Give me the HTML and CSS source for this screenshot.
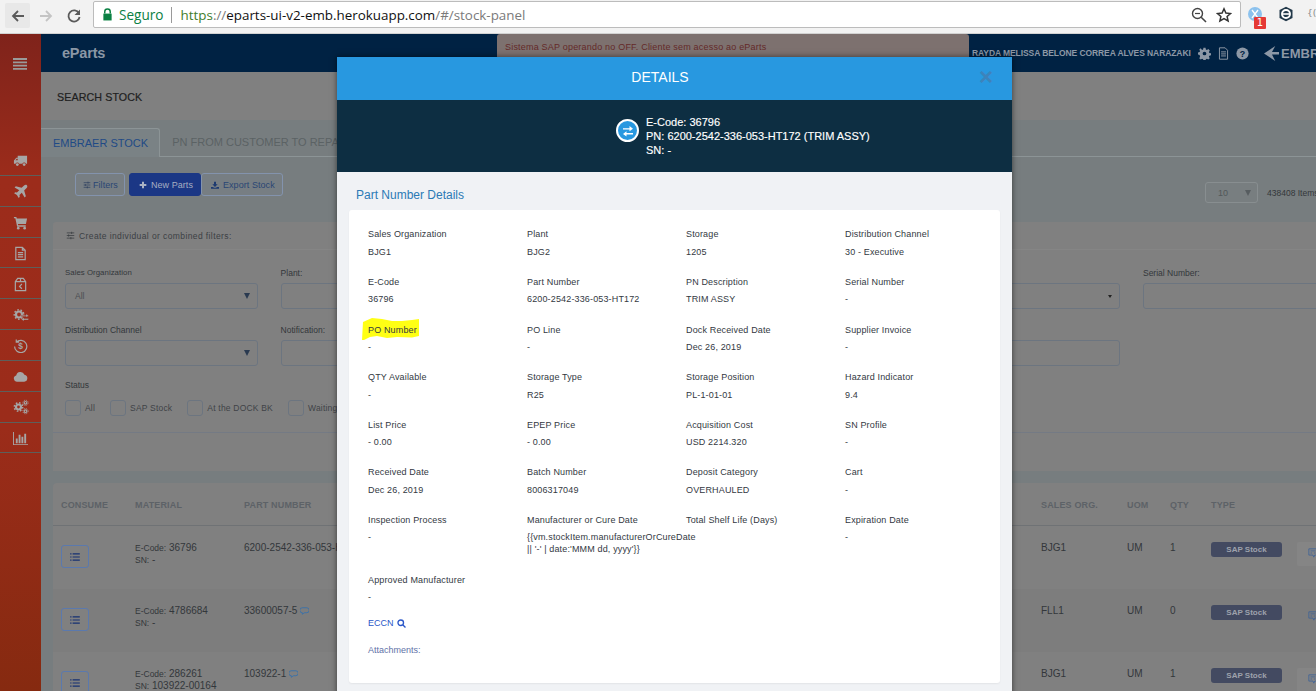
FILE: index.html
```html
<!DOCTYPE html>
<html lang="pt">
<head>
<meta charset="utf-8">
<title>eParts</title>
<link rel="stylesheet" href="styles.css">
</head>
<body>
<header class="chrome">
  <div class="nav-btn nav-btn-active"><svg viewBox="0 0 16 16" class="chrome-ic"><path d="M14 8H3M8 3 3 8l5 5" fill="none" stroke="#5a5a5a" stroke-width="1.8"/></svg></div>
  <div class="nav-btn"><svg viewBox="0 0 16 16" class="chrome-ic"><path d="M2 8h11M8 3l5 5-5 5" fill="none" stroke="#c4c4c4" stroke-width="1.8"/></svg></div>
  <div class="nav-btn"><svg viewBox="0 0 16 16" class="chrome-ic"><path d="M13 5.2A5.6 5.6 0 1 0 13.6 9" fill="none" stroke="#5a5a5a" stroke-width="1.8"/><path d="M14 1.5V7H8.5z" fill="#5a5a5a"/></svg></div>
  <div class="address">
    <svg viewBox="0 0 12 14" class="lock"><path d="M3 6V4a3 3 0 0 1 6 0v2" fill="none" stroke="#0b8043" stroke-width="1.6"/><rect x="1.5" y="6" width="9" height="7.5" fill="#0b8043"/></svg>
    <span class="secure">Seguro</span>
    <span class="addr-sep"></span>
    <span class="url"><span class="url-scheme">https</span><span class="url-dim">://</span>eparts-ui-v2-emb.herokuapp.com<span class="url-dim">/#/stock-panel</span></span>
    <span class="addr-icons">
      <svg viewBox="0 0 16 16" class="chrome-ic"><circle cx="6.500" cy="6.500" r="5" fill="none" stroke="#444" stroke-width="1.4"/><path d="M10.200 10.200 15 15" stroke="#444" stroke-width="1.6"/><path d="M4 6.500h5" stroke="#444" stroke-width="1.2"/></svg>
      <svg viewBox="0 0 16 16" class="chrome-ic"><path d="m8 1.800 1.900 4.200 4.600.5-3.400 3 1 4.500L8 11.700 3.900 14l1-4.500-3.400-3 4.600-.5z" fill="none" stroke="#333" stroke-width="1.5"/></svg>
    </span>
  </div>
  <div class="ext">
    <svg viewBox="0 0 16 16" class="ext-ic"><circle cx="8" cy="8" r="7" fill="#8cc2ee"/><path d="M5 4l6 8M11 4l-6 8" stroke="#fff" stroke-width="1.3"/></svg>
    <span class="ext-badge">1</span>
  </div>
  <div class="ext ext-e"><svg viewBox="0 0 16 16" class="ext-ic"><path d="M8 .8 14.500 4v8L8 15.200 1.500 12V4z" fill="#22394a"/><circle cx="8" cy="8" r="4" fill="none" stroke="#fff" stroke-width="1.9"/><path d="M4.500 8h7" stroke="#fff" stroke-width="1.6"/></svg></div>
  <span class="ext-more">{(</span>
</header>

<div class="app">
  <aside class="side">
    <div class="burger"><svg viewBox="0 0 14 12" class="burger-ic"><path d="M0 1h14M0 4.300h14M0 7.600h14M0 10.900h14" stroke="#9a9a9a" stroke-width="1.8"/></svg></div>
    <ul class="side-list">
      <li class="side-item"><svg viewBox="0 0 16 16" class="side-ic"><path d="M5 3h10v8.500h-1.200a2 2 0 0 0-3.800 0H6.500a2 2 0 0 0-3.800 0H1V8l2.500-3H5zM4 6 2.600 7.800H5V6z"/><circle cx="4.600" cy="12.300" r="1.500"/><circle cx="11.900" cy="12.300" r="1.500"/></svg></li>
      <li class="side-item"><svg viewBox="0 0 16 16" class="side-ic"><path d="M14.800 1.200c-.8-.8-2.200-.5-3 .3L9.200 4.100 3 2.300 1.700 3.600l5 3L4.200 9.100 2.300 8.800 1.200 9.900l3 1.900 1.900 3 1.100-1.100-.3-1.900 2.500-2.500 3 5 1.300-1.300-1.800-6.200 2.600-2.600c.8-.8 1.100-2.200.3-3z"/></svg></li>
      <li class="side-item"><svg viewBox="0 0 16 16" class="side-ic"><path d="M1 2h2.600l.4 1.700H15l-1.200 6H5.300l.3 1.300h8v1.500H4.400L2.500 3.500H1z"/><circle cx="5.600" cy="14" r="1.400"/><circle cx="12.400" cy="14" r="1.400"/></svg></li>
      <li class="side-item"><svg viewBox="0 0 16 16" class="side-ic side-ic-line"><path d="M3 1.500h7l3 3v10H3zM10 1.500v3h3M5.200 7h5.600M5.200 9.300h5.600M5.200 11.600h5.600"/></svg></li>
      <li class="side-item"><svg viewBox="0 0 16 16" class="side-ic side-ic-line"><path d="M2.500 5 5 1.500h6L13.500 5v9.500h-11zM2.500 5h11M8 1.500V5M9.500 7.500 7 10l2.500 2.500"/></svg></li>
      <li class="side-item"><svg viewBox="0 0 16 16" class="side-ic-free"><circle cx="6" cy="7.500" r="3" class="gear-core"/><circle cx="6" cy="7.500" r="4.700" class="gear-teeth"/><path d="M8.500 8.300H13V6.800l2.800 2.200L13 10.200V9.400H8.500zM15.500 11.400H11V10.400L8.300 12.300 11 14.200V13H15.500z" class="gear-arrows"/></svg></li>
      <li class="side-item"><svg viewBox="0 0 16 16" class="side-ic side-ic-line"><path d="M3.500 4.500A6.500 6.500 0 1 1 1.700 9M3.500 1.500v3h3"/><text x="8" y="11.500" class="side-dollar">$</text></svg></li>
      <li class="side-item"><svg viewBox="0 0 16 16" class="side-ic"><path d="M4 13.500a3.300 3.300 0 0 1-.6-6.500 4.600 4.600 0 0 1 8.800-1A3.800 3.800 0 0 1 12 13.500z"/></svg></li>
      <li class="side-item"><svg viewBox="0 0 16 16" class="side-ic-free"><circle cx="5.500" cy="8" r="2.500" class="gear-core"/><circle cx="5.500" cy="8" r="4.200" class="gear-teeth"/><circle cx="12.500" cy="3.800" r="1.300" class="gear-core gear-small"/><circle cx="12.500" cy="3.800" r="2.600" class="gear-teeth gear-teeth-small"/><circle cx="12.500" cy="12.200" r="1.300" class="gear-core gear-small"/><circle cx="12.500" cy="12.200" r="2.600" class="gear-teeth gear-teeth-small"/></svg></li>
      <li class="side-item"><svg viewBox="0 0 16 16" class="side-ic"><path d="M0 1h1v13h15v1H0zM3 8h2v5H3zM6 4h2v9H6zM9 6h2v7H9zM12 3h2v10h-2z"/></svg></li>
    </ul>
  </aside>

  <main class="main">
    <div class="topbar">
      <span class="brand">eParts</span>
      <div class="topbar-right">
        <span class="user">RAYDA MELISSA BELONE CORREA ALVES NARAZAKI</span>
        <svg viewBox="0 0 16 16" class="top-ic"><path fill-rule="evenodd" d="M6.700 1h2.600l.4 2 1.300.6 1.700-1.100 1.800 1.800-1.100 1.700.6 1.300 2 .4v2.600l-2 .4-.6 1.300 1.100 1.700-1.800 1.800-1.700-1.100-1.300.6-.4 2H6.700l-.4-2-1.300-.6-1.700 1.100-1.800-1.800 1.100-1.700L2 9.700 0 9.300V6.700l2-.4.600-1.300-1.100-1.700 1.800-1.800L5 3.600 6.300 3zM8 5.700a2.300 2.300 0 1 0 0 4.600 2.300 2.300 0 0 0 0-4.600z"/></svg>
        <svg viewBox="0 0 16 16" class="top-ic top-ic-line"><path d="M3 1h7l3 3v11H3zM5 6h6M5 8.500h6M5 11h6"/></svg>
        <svg viewBox="0 0 16 16" class="top-ic"><circle cx="8" cy="8" r="7.500"/><text x="8" y="12" class="top-q">?</text></svg>
        <span class="logo"><svg viewBox="0 0 16 16" class="logo-ic"><path d="M0 8 12 0 8.500 6.500H16V9H8.500L12 16z"/></svg><span class="logo-text">EMBRAER</span></span>
      </div>
    </div>
    <div class="band">SEARCH STOCK</div>

    <div class="stock">
      <nav class="tabs">
        <span class="tab tab-active">EMBRAER STOCK</span>
        <span class="tab">PN FROM CUSTOMER TO REPAIR</span>
      </nav>

      <div class="toolbar">
        <div class="btn-group">
          <button class="btn btn-filters"><svg viewBox="0 0 12 12" class="btn-ic btn-ic-line"><path d="M1 2.500h10M1 6h10M1 9.500h10M7.500 1v3M3.500 4.500v3M6.500 8v3"/></svg>Filters</button>
          <button class="btn btn-primary"><svg viewBox="0 0 12 12" class="btn-ic"><path d="M4.500 1h3v3.500H11v3H7.500V11h-3V7.500H1v-3h3.500z" fill="#aab2c4"/></svg>New Parts</button>
          <button class="btn"><svg viewBox="0 0 12 12" class="btn-ic"><path d="M4.500 1h3v4H10L6 9 2 5h2.500zM0 9h3l1.500 1.200h3L9 9h3v2.500H0z" fill="#1d3a70"/></svg>Export Stock</button>
        </div>
        <div class="pager">
          <span class="pager-select"><span>10</span><i class="caret caret-soft"></i></span>
          <span class="pager-text">438408 Items</span>
        </div>
      </div>

      <section class="panel">
        <div class="panel-head"><svg viewBox="0 0 12 12" class="btn-ic btn-ic-dark"><path d="M1 2.500h10M1 6h10M1 9.500h10M7.500 1v3M3.500 4.500v3M6.500 8v3"/></svg>Create individual or combined filters:</div>
        <div class="filters">
          <div class="field"><label class="field-label field-label-tight">Sales Organization</label><div class="control"><span>All</span><i class="caret"></i></div></div>
          <div class="field"><label class="field-label">Plant:</label><div class="control"></div></div>
          <div class="field"></div>
          <div class="field"></div>
          <div class="field"><label class="field-label">&nbsp;</label><div class="control"><i class="caret caret-sm"></i></div></div>
          <div class="field"><label class="field-label">Serial Number:</label><div class="control"></div></div>
          <div class="field"><label class="field-label">Distribution Channel</label><div class="control"><i class="caret"></i></div></div>
          <div class="field"><label class="field-label">Notification:</label><div class="control"></div></div>
          <div class="field"></div>
          <div class="field"></div>
          <div class="field"><label class="field-label">&nbsp;</label><div class="control"></div></div>
        </div>
        <div class="status">
          <div class="field-label">Status</div>
          <div class="checks">
            <span class="check"><i class="box"></i>All</span>
            <span class="check"><i class="box"></i>SAP Stock</span>
            <span class="check"><i class="box"></i>At the DOCK BK</span>
            <span class="check"><i class="box"></i>Waiting</span>
          </div>
        </div>
        <div class="panel-foot"></div>
      </section>

      <section class="table">
        <div class="row row-head">
          <span>CONSUME</span><span>MATERIAL</span><span>PART NUMBER</span><span>SALES ORG.</span><span>UOM</span><span>QTY</span><span>TYPE</span>
        </div>
        <div class="row">
          <span><button class="list-btn"><svg viewBox="0 0 12 10" class="list-ic"><path d="M3 1.200h9M3 5h9M3 8.800h9M0 1.200h1.600M0 5h1.600M0 8.800h1.600"/></svg></button></span>
          <span class="mat"><span><small>E-Code:</small> 36796</span><span><small>SN:</small> -</span></span>
          <span>6200-2542-336-053-HT172</span><span>BJG1</span><span>UM</span><span>1</span>
          <span><b class="badge">SAP Stock</b></span>
          <span class="note"><svg viewBox="0 0 12 12" class="note-ic"><path d="M1 1h10v7.500H8L7 11l-1-2.500H1zM3 3.500h6M3 6h2M7 6h2"/></svg></span>
        </div>
        <div class="row row-alt">
          <span><button class="list-btn"><svg viewBox="0 0 12 10" class="list-ic"><path d="M3 1.200h9M3 5h9M3 8.800h9M0 1.200h1.600M0 5h1.600M0 8.800h1.600"/></svg></button></span>
          <span class="mat"><span><small>E-Code:</small> 4786684</span><span><small>SN:</small> -</span></span>
          <span>33600057-5 <svg viewBox="0 0 12 10" class="bubble"><path d="M3 .7h6a2.300 2.300 0 0 1 0 6.600H6L3 9.300V7.300a3.300 3.300 0 0 1 0-6.600z"/></svg></span><span>FLL1</span><span>UM</span><span>0</span>
          <span><b class="badge">SAP Stock</b></span>
          <span class="note note-plain"><svg viewBox="0 0 12 12" class="note-ic"><path d="M1 1h10v7.500H8L7 11l-1-2.500H1zM3 3.500h6M3 6h2M7 6h2"/></svg></span>
        </div>
        <div class="row">
          <span><button class="list-btn"><svg viewBox="0 0 12 10" class="list-ic"><path d="M3 1.200h9M3 5h9M3 8.800h9M0 1.200h1.600M0 5h1.600M0 8.800h1.600"/></svg></button></span>
          <span class="mat"><span><small>E-Code:</small> 286261</span><span><small>SN:</small> 103922-00164</span></span>
          <span>103922-1 <svg viewBox="0 0 12 10" class="bubble"><path d="M3 .7h6a2.300 2.300 0 0 1 0 6.600H6L3 9.300V7.300a3.300 3.300 0 0 1 0-6.600z"/></svg></span><span>BJG1</span><span>UM</span><span>1</span>
          <span><b class="badge">SAP Stock</b></span>
          <span class="note"><svg viewBox="0 0 12 12" class="note-ic"><path d="M1 1h10v7.500H8L7 11l-1-2.500H1zM3 3.500h6M3 6h2M7 6h2"/></svg></span>
        </div>
      </section>
    </div>
  </main>

  <div class="toast">Sistema SAP operando no OFF. Cliente sem acesso ao eParts</div>

  <div class="modal">
    <div class="modal-head">DETAILS<span class="modal-close">×</span></div>
    <div class="modal-sub">
      <span class="swap"><svg viewBox="0 0 12 12" class="swap-ic"><path d="M1 3.200h6.500V1L11 3.700 7.500 6.200V4.400H1zM11 8H4.500V6.300L1 9l3.500 2.500V9.400H11z"/></svg></span>
      <div class="modal-id">
        <div>E-Code: 36796</div>
        <div>PN: 6200-2542-336-053-HT172 (TRIM ASSY)</div>
        <div>SN: -</div>
      </div>
    </div>
    <div class="modal-body">
      <h2 class="section-title">Part Number Details</h2>
      <div class="card">
        <div class="details">
          <div class="item"><div class="item-label">Sales Organization</div><div class="item-value">BJG1</div></div>
          <div class="item"><div class="item-label">Plant</div><div class="item-value">BJG2</div></div>
          <div class="item"><div class="item-label">Storage</div><div class="item-value">1205</div></div>
          <div class="item"><div class="item-label">Distribution Channel</div><div class="item-value">30 - Executive</div></div>

          <div class="item"><div class="item-label">E-Code</div><div class="item-value">36796</div></div>
          <div class="item"><div class="item-label">Part Number</div><div class="item-value">6200-2542-336-053-HT172</div></div>
          <div class="item"><div class="item-label">PN Description</div><div class="item-value">TRIM ASSY</div></div>
          <div class="item"><div class="item-label">Serial Number</div><div class="item-value">-</div></div>

          <div class="item item-marked">
            <svg viewBox="0 0 58 23" class="marker"><path d="M1 4 10 0l10 1 10 2 10 0 10-1 7-1 0 17-7 1.500-15-.5-10 1-10-2-7 1-2 1-4 2H0z"/></svg>
            <div class="item-label">PO Number</div><div class="item-value">-</div>
          </div>
          <div class="item"><div class="item-label">PO Line</div><div class="item-value">-</div></div>
          <div class="item"><div class="item-label">Dock Received Date</div><div class="item-value">Dec 26, 2019</div></div>
          <div class="item"><div class="item-label">Supplier Invoice</div><div class="item-value">-</div></div>

          <div class="item"><div class="item-label">QTY Available</div><div class="item-value">-</div></div>
          <div class="item"><div class="item-label">Storage Type</div><div class="item-value">R25</div></div>
          <div class="item"><div class="item-label">Storage Position</div><div class="item-value">PL-1-01-01</div></div>
          <div class="item"><div class="item-label">Hazard Indicator</div><div class="item-value">9.4</div></div>

          <div class="item"><div class="item-label">List Price</div><div class="item-value">- 0.00</div></div>
          <div class="item"><div class="item-label">EPEP Price</div><div class="item-value">- 0.00</div></div>
          <div class="item"><div class="item-label">Acquisition Cost</div><div class="item-value">USD 2214.320</div></div>
          <div class="item"><div class="item-label">SN Profile</div><div class="item-value">-</div></div>

          <div class="item"><div class="item-label">Received Date</div><div class="item-value">Dec 26, 2019</div></div>
          <div class="item"><div class="item-label">Batch Number</div><div class="item-value">8006317049</div></div>
          <div class="item"><div class="item-label">Deposit Category</div><div class="item-value">OVERHAULED</div></div>
          <div class="item"><div class="item-label">Cart</div><div class="item-value">-</div></div>

          <div class="item"><div class="item-label">Inspection Process</div><div class="item-value">-</div></div>
          <div class="item"><div class="item-label">Manufacturer or Cure Date</div><div class="item-value">{{vm.stockItem.manufacturerOrCureDate<br>|| '-' | date:'MMM dd, yyyy'}}</div></div>
          <div class="item"><div class="item-label">Total Shelf Life (Days)</div><div class="item-value"></div></div>
          <div class="item"><div class="item-label">Expiration Date</div><div class="item-value">-</div></div>

          <div class="item"><div class="item-label">Approved Manufacturer</div><div class="item-value">-</div></div>
        </div>
        <div class="eccn">ECCN <svg viewBox="0 0 12 12" class="eccn-ic"><circle cx="5" cy="5" r="3.700"/><path d="m8 8 3.300 3.300"/></svg></div>
        <div class="attach">Attachments:</div>
      </div>
    </div>
  </div>
</div>
</body>
</html>
```

FILE: styles.css
```css
* { box-sizing: border-box; }
html, body { margin: 0; height: 100%; overflow: hidden; }
body { width: 1316px; height: 691px; font-family: "Liberation Sans", Arial, sans-serif; background: #808080; color: #3b3f44; }

/* browser chrome */
.chrome { height: 34px; display: flex; align-items: flex-start; background: #f2f2f2; border-bottom: 1px solid #d2d2d2; overflow: hidden; }
.nav-btn { width: 25px; height: 25px; flex: none; margin: 3px 0 0 5px; display: flex; align-items: center; justify-content: center; border-radius: 2px; }
.nav-btn + .nav-btn { margin-left: 3px; }
.nav-btn-active { background: #e8e8e8; }
.chrome-ic { width: 16px; height: 16px; display: block; }
.address { width: 1148px; flex: none; height: 27px; margin: 1px 0 0 7px; padding-left: 7px; display: flex; align-items: center; background: #fff; border: 1px solid #bcbcbc; border-radius: 2px; }
.lock { width: 11px; height: 13px; margin-left: 1px; }
.secure { margin-left: 6px; font: 13.600px "Open Sans", sans-serif; color: #0b8043; }
.addr-sep { width: 1px; height: 16px; margin: 0 9px 0 7px; background: #9a9a9a; }
.url { font: 13.400px "Open Sans", sans-serif; color: #111; white-space: nowrap; }
.url-scheme { color: #3f7d2c; }
.url-dim { color: #7a7a7a; }
.addr-icons { margin-left: auto; margin-right: 8px; display: flex; gap: 9px; }
.ext { width: 18px; height: 18px; flex: none; margin: 6px 0 0 6px; position: relative; }
.ext-ic { width: 16px; height: 16px; display: block; }
.ext-badge { position: absolute; left: 7px; top: 11px; width: 12px; height: 12px; background: #e53935; color: #fff; font: 10px/12px "DejaVu Sans", sans-serif; text-align: center; border-radius: 1px; }
.ext-e { margin-left: 13px; }
.ext-more { flex: none; margin: 8px 0 0 11px; font: 9px "DejaVu Sans", sans-serif; color: #888; }

/* app frame */
.app { position: relative; height: 657px; display: flex; overflow: hidden; }
.side { width: 41px; flex: none; background: linear-gradient(#7f231b 0, #9c2c1b 22%, #9b2c1a 60%, #862a10 100%); }
.burger { height: 111px; padding: 24px 0 0 13px; }
.burger-ic { width: 14px; height: 12px; display: block; }
.side-list { margin: 0; padding: 0; list-style: none; }
.side-item { height: 30.850px; padding-top: 1.500px; display: flex; align-items: center; justify-content: center; border-bottom: 1px solid #5d5f5b; }
.side-ic { width: 15px; height: 15px; fill: #a6a6a6; }
.side-ic-line { fill: none; stroke: #a6a6a6; stroke-width: 1.3; }
.side-ic-free { width: 16px; height: 16px; }
.gear-core { fill: none; stroke: #a6a6a6; stroke-width: 2.2; }
.gear-small { stroke-width: 1.2; }
.gear-teeth { fill: none; stroke: #a6a6a6; stroke-width: 1.5; stroke-dasharray: 1.6 1.7; }
.gear-teeth-small { stroke-width: 1; stroke-dasharray: 1 1.05; }
.gear-arrows { fill: #a6a6a6; stroke: #9b2c1a; stroke-width: .4; }
.side-dollar { font: bold 9px "Liberation Sans", sans-serif; fill: #a6a6a6; stroke: none; text-anchor: middle; }

.main { flex: 1; min-width: 0; overflow: hidden; background: #777d7f; }
.topbar { height: 38px; display: flex; align-items: center; justify-content: space-between; background: #002243; padding-left: 21px; }
.brand { font: bold 14.500px "Liberation Sans", sans-serif; color: #8a97a5; letter-spacing: -.2px; }
.topbar-right { width: 344px; flex: none; display: flex; align-items: center; white-space: nowrap; overflow: hidden; }
.user { flex: none; width: 226px; font: bold 8.500px "Liberation Sans", sans-serif; color: #8d98a6; letter-spacing: -.08px; }
.top-ic { width: 13px; height: 13px; fill: #8d98a6; margin-right: 6px; flex: none; }
.top-ic-line { fill: none; stroke: #8d98a6; stroke-width: 1.2; }
.top-q { font: bold 11px "Liberation Sans", sans-serif; fill: #002243; text-anchor: middle; }
.logo { display: flex; align-items: center; margin-left: 9px; }
.logo-ic { width: 15px; height: 15px; fill: #8d98a6; flex: none; }
.logo-text { margin-left: 2px; font: bold 13px "Liberation Sans", sans-serif; color: #8d98a6; }
.band { height: 48px; padding: 1px 0 0 16px; display: flex; align-items: center; background: #808080; font-size: 10.700px; color: #202020; letter-spacing: .1px; -webkit-text-stroke: .2px #202020; }

.stock { padding-top: 8px; }
.tabs { height: 29px; display: flex; border-bottom: 1px solid #8c9496; }
.tab { padding: 0 12px; margin-left: 0; font-size: 11px; line-height: 29px; color: #5b6264; white-space: nowrap; }
.tab-active { height: 29px; padding-right: 11px; color: #1f4a86; background: #7a8285; border: 1px solid #8c9496; border-bottom: 0; border-left: 0; border-radius: 0 3px 0 0; }

.toolbar { height: 65px; padding: 16px 0 0 34px; display: flex; justify-content: space-between; align-items: flex-start; }
.btn-group { display: flex; }
.btn { height: 23px; padding: 0 7px 0 9px; display: flex; align-items: center; gap: 4px; background: #777e83; border: 1px solid #8393ad; border-radius: 3px; font: 9px "Liberation Sans", sans-serif; letter-spacing: .06px; color: #2a4674; white-space: nowrap; }
.btn-filters { margin-right: 4px; padding: 0 6px 0 7px; gap: 2px; }
.btn-primary { background: #1b3785; border-color: #1b3785; color: #a6aec2; }
.btn-ic { width: 8px; height: 8px; flex: none; }
.btn-ic-line { fill: none; stroke: #2a3c5e; stroke-width: 1; }
.btn-ic-dark { fill: none; stroke: #3a3e42; stroke-width: 1; width: 9px; height: 9px; }
.pager { display: flex; align-items: center; gap: 9px; margin-top: 9px; width: 111px; flex: none; white-space: nowrap; }
.pager-select { width: 53px; height: 21px; padding: 0 6px 0 12px; display: flex; align-items: center; justify-content: space-between; background: #787e80; border: 1px solid #888e90; border-radius: 3px; font-size: 9px; color: #52585a; flex: none; }
.pager-text { font-size: 8.500px; color: #33373a; }

.caret { width: 0; height: 0; margin-left: auto; border-left: 3.500px solid transparent; border-right: 3.500px solid transparent; border-top: 6px solid #2a3a50; }
.caret-soft { border-top-color: #575d60; }
.caret-sm { border-left-width: 2.500px; border-right-width: 2.500px; border-top-width: 3px; border-top-color: #222; }

.panel { width: 1300px; margin-left: 12px; background: #808080; border-radius: 3px 3px 0 0; }
.panel-head { height: 28px; padding-left: 13px; display: flex; align-items: center; gap: 4px; font-size: 8.500px; letter-spacing: .4px; color: #3b3f44; border-bottom: 1px solid #858585; }
.filters { padding: 17px 0 0 12px; display: grid; grid-template-columns: repeat(6, 193px); column-gap: 22.600px; }
.field { height: 57px; }
.field-label { display: block; height: 16px; font-size: 8.500px; line-height: 12px; color: #33373b; }
.field-label-tight { font-size: 7.800px; letter-spacing: .05px; }
.control { height: 26px; padding: 0 7px 0 9px; display: flex; align-items: center; background: #808080; border: 1px solid #6c7580; border-radius: 3px; font-size: 8.500px; color: #4a4e52; }
.status { margin-top: -2px; padding-left: 12px; height: 53px; }
.checks { margin-top: 5px; display: flex; gap: 15px; }
.check { display: flex; align-items: center; gap: 4px; height: 16px; font-size: 8.500px; letter-spacing: .2px; color: #3f4347; white-space: nowrap; }
.box { width: 16px; height: 16px; border: 1px solid #6c7580; border-radius: 3px; }
.panel-foot { height: 39px; border-top: 1px solid #747a84; }

.table { width: 1300px; margin: 12px 0 0 12px; background: #808080; border-radius: 4px 4px 0 0; }
.row { height: 63px; padding: 16px 0 0 8px; display: grid; grid-template-columns: 74px 109px 797px 86px 43px 41px 86px 40px; align-items: start; font-size: 10px; line-height: 12px; color: #33373b; }
.row-alt { background: #7d7d7d; }
.row-head { height: 43px; padding-top: 16px; font-weight: bold; font-size: 9px; letter-spacing: .15px; color: #5d6267; border-bottom: 1px solid #6f7275; }
.mat { display: flex; flex-direction: column; }
.mat small { font-size: 8.500px; }
.list-btn { margin-top: 3px; width: 28px; height: 23px; padding: 0; display: flex; align-items: center; justify-content: center; background: #808080; border: 1px solid #5b79ad; border-radius: 3px; }
.list-ic { width: 10px; height: 8px; fill: none; stroke: #142f72; stroke-width: 1.5; }
.badge { display: block; width: 71px; height: 15px; background: #434a61; border-radius: 3px; font: bold 8px/15px "Liberation Sans", sans-serif; text-align: center; color: #9ea2ac; }
.note { display: block; height: 24px; padding: 5px 0 0 11px; background: #858585; border-radius: 2px; }
.note-plain { background: none; }
.note-ic { width: 10px; height: 12px; fill: none; stroke: #3f6398; stroke-width: 1; display: block; }
.bubble { width: 9px; height: 8px; fill: none; stroke: #2a6fb5; stroke-width: 1; vertical-align: -1px; }

/* alert */
.toast { position: absolute; left: 497px; top: 0; width: 472px; height: 23px; padding-left: 8px; line-height: 26px; background: #7d716f; border-radius: 3px 3px 0 0; color: #642a29; font-size: 9px; letter-spacing: .2px; }

/* modal */
.modal { position: absolute; left: 337px; top: 23px; width: 675px; height: 640px; background: #f0f2f5; box-shadow: 0 0 6px rgba(0, 0, 0, .55); }
.modal-head { position: relative; height: 43px; padding: 0 29px 3px 0; display: flex; align-items: center; justify-content: center; background: #2898e0; color: #fff; font-size: 14px; }
.modal-close { position: absolute; right: 19px; top: 7px; font-size: 24px; line-height: 26px; font-weight: bold; color: #3d83bb; }
.modal-sub { height: 72px; padding: 15px 0 0 279px; display: flex; gap: 7px; background: #0d2e42; }
.swap { width: 23px; height: 23px; margin-top: 4px; display: flex; align-items: center; justify-content: center; background: #2898e0; border: 2px solid #fff; border-radius: 50%; }
.swap-ic { width: 12px; height: 12px; fill: #fff; }
.modal-id { font-size: 11px; line-height: 14px; color: #fff; white-space: nowrap; -webkit-text-stroke: .15px #fff; }
.modal-body { padding: 0 12px 8px; }
.section-title { margin: 0; height: 38px; padding: 16px 0 0 7px; font-size: 12px; line-height: 14px; font-weight: normal; color: #2b7ab5; }
.card { height: 473px; padding: 18.400px 0 0 19px; background: #fff; border-radius: 3px; box-shadow: 0 1px 2px rgba(0, 0, 0, .06); }
.details { display: grid; grid-template-columns: repeat(4, 159px); }
.item { position: relative; padding-bottom: 18.100px; font-size: 9px; line-height: 12px; color: #33393f; }
.item-label { margin-bottom: 5.500px; letter-spacing: .15px; position: relative; }
.item-value { min-height: 12px; position: relative; letter-spacing: .15px; }
.marker { position: absolute; left: -6px; top: -6px; width: 58px; height: 23px; fill: #ffff14; }
.eccn { margin-top: -4px; height: 27px; display: flex; align-items: flex-start; gap: 3px; font-size: 9px; line-height: 12px; color: #2a56c8; }
.eccn-ic { width: 9px; height: 9px; margin-top: 1.500px; fill: none; stroke: #2a56c8; stroke-width: 1.8; }
.attach { font-size: 9px; line-height: 12px; color: #5f72a8; }
```
